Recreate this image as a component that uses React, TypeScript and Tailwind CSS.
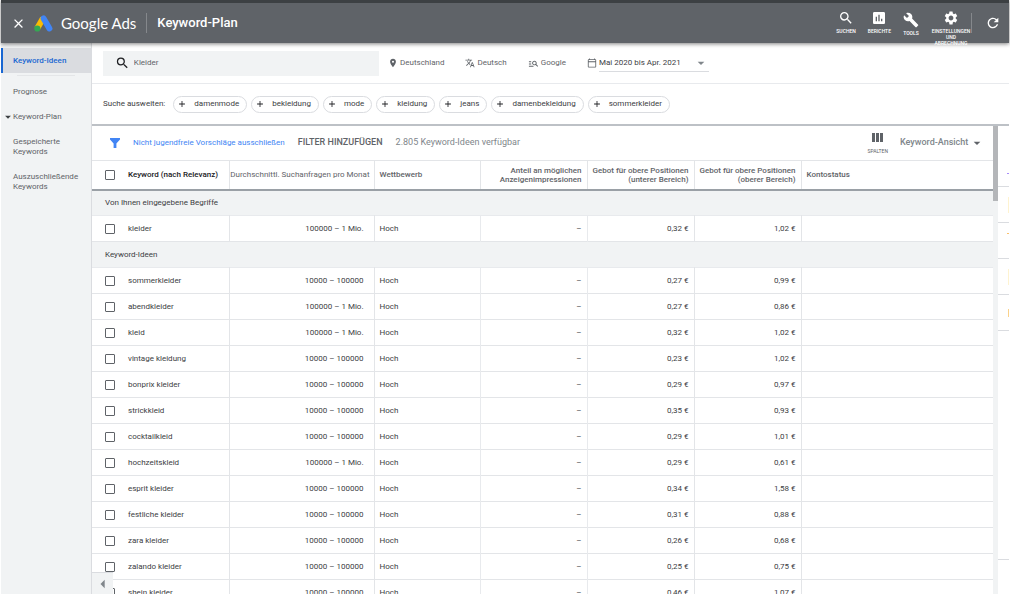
import { useState } from "react";
import {
  MdAdd,
  MdArrowDropDown,
  MdArrowLeft,
  MdAssessment,
  MdBuild,
  MdClose,
  MdManageSearch,
  MdOutlineCalendarToday,
  MdPlace,
  MdRefresh,
  MdSearch,
  MdSettings,
  MdTranslate,
} from "react-icons/md";

type Keyword = {
  name: string;
  volume: string;
  low: string;
  high: string;
};

const LOW_VOLUME = "10000 – 100000";
const HIGH_VOLUME = "100000 – 1 Mio.";

const entered: Keyword[] = [
  { name: "kleider", volume: HIGH_VOLUME, low: "0,32 €", high: "1,02 €" },
];

const ideas: Keyword[] = [
  { name: "sommerkleider", volume: LOW_VOLUME, low: "0,27 €", high: "0,99 €" },
  { name: "abendkleider", volume: HIGH_VOLUME, low: "0,27 €", high: "0,86 €" },
  { name: "kleid", volume: HIGH_VOLUME, low: "0,32 €", high: "1,02 €" },
  { name: "vintage kleidung", volume: LOW_VOLUME, low: "0,23 €", high: "1,02 €" },
  { name: "bonprix kleider", volume: LOW_VOLUME, low: "0,29 €", high: "0,97 €" },
  { name: "strickkleid", volume: LOW_VOLUME, low: "0,35 €", high: "0,93 €" },
  { name: "cocktailkleid", volume: LOW_VOLUME, low: "0,29 €", high: "1,01 €" },
  { name: "hochzeitskleid", volume: HIGH_VOLUME, low: "0,29 €", high: "0,61 €" },
  { name: "esprit kleider", volume: LOW_VOLUME, low: "0,34 €", high: "1,58 €" },
  { name: "festliche kleider", volume: LOW_VOLUME, low: "0,31 €", high: "0,88 €" },
  { name: "zara kleider", volume: LOW_VOLUME, low: "0,26 €", high: "0,68 €" },
  { name: "zalando kleider", volume: LOW_VOLUME, low: "0,25 €", high: "0,75 €" },
  { name: "shein kleider", volume: LOW_VOLUME, low: "0,46 €", high: "1,07 €" },
];

const suggestions = [
  "damenmode",
  "bekleidung",
  "mode",
  "kleidung",
  "jeans",
  "damenbekleidung",
  "sommerkleider",
];

function AdsLogo() {
  return (
    <svg viewBox="0 0 19 17" className="h-[17px] w-[19px]">
      <path d="M9 3.2 3.2 13.4" stroke="#fbbc04" strokeWidth="6" />
      <path
        d="M9.6 3.4 15.4 13.4"
        stroke="#4285f4"
        strokeWidth="6"
        strokeLinecap="round"
      />
      <circle cx="3.3" cy="13.5" r="3.1" fill="#34a853" />
    </svg>
  );
}

function Header() {
  return (
    <header className="relative z-10 flex h-[43px] shrink-0 items-center border-t-3 border-[#3c4043] bg-[#5f6368] pl-2.5 text-white shadow-[0_1px_4px_rgba(0,0,0,0.5)]">
      <button aria-label="Schließen">
        <MdClose className="size-[15px]" />
      </button>
      <div className="ml-2 flex items-center gap-2">
        <AdsLogo />
        <span className="font-['Lato',sans-serif] text-[15px] leading-5">
          Google Ads
        </span>
      </div>
      <div className="mx-[10px] h-5 w-px bg-[#85888c]" />
      <h1 className="text-[13px] font-medium">Keyword-Plan</h1>

      <nav className="ml-auto flex h-full items-start gap-3 pt-[7px] text-center text-[5px] leading-[6px] font-medium">
        <button className="flex flex-col items-center gap-0.5">
          <MdSearch className="size-4" />
          SUCHEN
        </button>
        <button className="flex flex-col items-center gap-0.5">
          <MdAssessment className="size-4" />
          BERICHTE
        </button>
        <button className="flex flex-col items-center gap-0.5 pt-0.5">
          <MdBuild className="size-4" />
          TOOLS
        </button>
        <button className="flex w-10 flex-col items-center gap-0.5">
          <MdSettings className="size-4" />
          <span>EINSTELLUNGEN UND ABRECHNUNG</span>
        </button>
      </nav>
      <div className="h-5 w-px bg-[#85888c]" />
      <button aria-label="Aktualisieren" className="mr-2 ml-[13px]">
        <MdRefresh className="size-4" />
      </button>
    </header>
  );
}

function Sidebar() {
  return (
    <nav className="w-[90px] shrink-0 bg-[#f1f3f4] pt-[5px] text-[8px] leading-[10px] text-[#5f6368]">
      <a
        href="#ideen"
        className="flex h-[25px] items-center border-l-2 border-[#1967d2] bg-[#dadce0] pl-2.5 font-medium text-[#1967d2]"
      >
        Keyword-Ideen
      </a>
      <div className="mx-4 mt-0.5 h-px bg-[#e4e6e8]" />
      <a href="#prognose" className="mt-[11px] block pl-3">
        Prognose
      </a>
      <a href="#plan" className="mt-[13px] flex items-center">
        <MdArrowDropDown className="-mr-0.5 size-3.5 text-[#3c4043]" />
        Keyword-Plan
      </a>
      <a href="#gespeichert" className="mt-[13px] block pl-3">
        Gespeicherte
        <br />
        Keywords
      </a>
      <a href="#auszuschliessen" className="mt-[15px] block pl-3">
        Auszuschließende
        <br />
        Keywords
      </a>
    </nav>
  );
}

function SearchBar() {
  return (
    <div className="flex h-[41px] items-center border-b border-[#e8eaed] pl-[11px] text-[8px] text-[#5f6368]">
      <label className="flex h-[25px] w-[276px] items-center gap-1 bg-[#f1f3f4] pl-3">
        <MdSearch aria-label="Suche" className="size-4 text-[#202124]" />
        <input
          defaultValue="Kleider"
          className="w-full bg-transparent outline-none"
        />
      </label>
      <button className="ml-[9px] flex items-center gap-0.5">
        <MdPlace className="size-[10px]" />
        Deutschland
      </button>
      <button className="ml-[21px] flex items-center gap-0.5">
        <MdTranslate className="size-[10px]" />
        Deutsch
      </button>
      <button className="ml-[21px] flex items-center gap-0.5">
        <MdManageSearch className="size-[11px]" />
        Google
      </button>
      <label className="ml-[21px] flex items-center gap-0.5">
        <MdOutlineCalendarToday
          aria-label="Zeitraum"
          className="size-[10px]"
        />
        <span className="flex h-[17px] w-[110px] items-center border-b border-[#dadce0]">
          <select className="w-full appearance-none text-[#3c4043] outline-none">
            <option>Mai 2020 bis Apr. 2021</option>
          </select>
          <MdArrowDropDown className="size-4 shrink-0 text-[#80868b]" />
        </span>
      </label>
    </div>
  );
}

function Suggestions() {
  return (
    <div className="flex h-[42px] items-center gap-1 border-b-2 border-[#bdc1c6] pl-[11px] text-[#3c4043]">
      <span className="mr-1 text-[8px]">Suche ausweiten:</span>
      {suggestions.map((s) => (
        <button
          key={s}
          className="flex h-[17px] items-center gap-[7px] rounded-full border border-[#dadce0] pr-[7px] pl-[3px] text-[8px]"
        >
          <MdAdd className="size-[10px] text-[#202124]" />
          {s}
        </button>
      ))}
    </div>
  );
}

function Toolbar() {
  return (
    <div className="flex h-[34px] shrink-0 items-center pl-[18px] text-[9px] text-[#80868b]">
      <svg viewBox="0 0 10 10" className="h-[10px] w-[10px] fill-[#4285f4]">
        <path d="M0 0h10v1.4L6.4 5.6V10H3.6V5.6L0 1.4z" />
      </svg>
      <a href="#filter" className="ml-[13px] text-[8px] text-[#4285f4]">
        Nicht jugendfreie Vorschläge ausschließen
      </a>
      <button className="ml-[13px] font-medium text-[#5f6368]">
        FILTER HINZUFÜGEN
      </button>
      <span className="ml-[13px]">2.805 Keyword-Ideen verfügbar</span>
      <button className="ml-auto flex flex-col items-center gap-1.5 text-[5px] leading-[6px] text-[#5f6368]">
        <svg viewBox="0 0 11 9" className="h-[9px] w-[11px] fill-current">
          <path d="M0 0h3v9H0zM4 0h3v9H4zM8 0h3v9H8z" />
        </svg>
        SPALTEN
      </button>
      <label className="mr-2 ml-3 flex items-center">
        <select
          aria-label="Ansicht"
          className="appearance-none font-medium outline-none"
        >
          <option>Keyword-Ansicht</option>
        </select>
        <MdArrowDropDown className="size-4 text-[#5f6368]" />
      </label>
    </div>
  );
}

function Checkbox({ label }: { label: string }) {
  return (
    <input
      type="checkbox"
      aria-label={label}
      className="ml-[13px] block size-[10px] appearance-none rounded-[1px] border border-[#5f6368] checked:bg-[#1a73e8]"
    />
  );
}

function GroupRow({ title }: { title: string }) {
  return (
    <tr className="h-[26px] border-b border-[#e8eaed] bg-[#f1f3f4]">
      <td colSpan={8} className="pl-[13px]">
        {title}
      </td>
    </tr>
  );
}

function KeywordRow({ row }: { row: Keyword }) {
  return (
    <tr className="h-[26px] border-b border-[#e3e5e8]">
      <td>
        <Checkbox label={row.name} />
      </td>
      <td className="border-r border-[#e3e5e8]">{row.name}</td>
      <td className="border-r border-[#e3e5e8] pr-2.5 text-right">
        {row.volume}
      </td>
      <td className="border-r border-[#e8eaed] pl-[5px]">Hoch</td>
      <td className="border-r border-[#e8eaed] pr-[5px] text-right">–</td>
      <td className="border-r border-[#e3e5e8] pr-[5px] text-right">
        {row.low}
      </td>
      <td className="border-r border-[#e3e5e8] pr-[5px] text-right">
        {row.high}
      </td>
      <td />
    </tr>
  );
}

function KeywordTable() {
  return (
    <table className="w-full table-fixed border-collapse text-left text-[8px] leading-[9px] text-[#3c4043]">
      <colgroup>
        <col className="w-9" />
        <col className="w-[101px]" />
        <col className="w-[145px]" />
        <col className="w-[106px]" />
        <col className="w-[107px]" />
        <col className="w-[107px]" />
        <col className="w-[107px]" />
        <col />
      </colgroup>
      <thead>
        <tr className="h-[29px] border-t border-b-2 border-t-[#e3e5e8] border-b-[#9aa0a6] text-[#5f6368] *:font-medium">
          <th>
            <Checkbox label="Alle auswählen" />
          </th>
          <th className="border-r border-[#e3e5e8] whitespace-nowrap text-[#202124]">
            Keyword (nach Relevanz)
          </th>
          <th className="border-r border-[#e3e5e8] pr-1 text-right whitespace-nowrap">
            <span className="font-normal">
              Durchschnittl. Suchanfragen pro Monat
            </span>
          </th>
          <th className="border-r border-[#e3e5e8] pl-[5px]">Wettbewerb</th>
          <th className="border-r border-[#e3e5e8] pr-[5px] text-right">
            Anteil an möglichen
            <br />
            Anzeigenimpressionen
          </th>
          <th className="border-r border-[#e3e5e8] pr-[5px] text-right whitespace-nowrap">
            Gebot für obere Positionen
            <br />
            (unterer Bereich)
          </th>
          <th className="border-r border-[#e3e5e8] pr-[5px] text-right whitespace-nowrap">
            Gebot für obere Positionen
            <br />
            (oberer Bereich)
          </th>
          <th className="pl-[5px]">Kontostatus</th>
        </tr>
      </thead>
      <tbody>
        <GroupRow title="Von Ihnen eingegebene Begriffe" />
        {entered.map((row) => (
          <KeywordRow key={row.name} row={row} />
        ))}
        <GroupRow title="Keyword-Ideen" />
        {ideas.map((row) => (
          <KeywordRow key={row.name} row={row} />
        ))}
      </tbody>
    </table>
  );
}

// edge of the panel that continues past the right side
function SidePanel() {
  return (
    <div className="flex w-[11px] shrink-0 flex-col items-end *:w-full *:border-b *:border-[#dadce0]">
      <div className="flex h-[61px] items-end justify-end pb-3">
        <span className="h-px w-0.5 bg-[#a78bfa]" />
      </div>
      <div className="flex h-9 items-center justify-end">
        <span className="h-4 w-px bg-[#fef3d0]" />
      </div>
      <div className="flex h-9 justify-end pt-2.5">
        <span className="h-px w-0.5 bg-[#fbc06a]" />
      </div>
      <div className="flex h-9 items-center justify-end">
        <span className="h-4 w-px bg-[#fef3d0]" />
      </div>
      <div className="flex h-9 items-center justify-end">
        <span className="h-2 w-px bg-[#fbd28a]" />
      </div>
      <div className="h-[229px]" />
    </div>
  );
}

export default function App() {
  const [menuOpen, setMenuOpen] = useState(true);

  return (
    <div className="flex h-screen flex-col overflow-hidden bg-white px-px font-['Roboto',sans-serif]">
      <Header />
      <div className="flex min-h-0 flex-1">
        {menuOpen && <Sidebar />}
        <main className="relative flex min-w-0 flex-1 flex-col border-l border-[#dadce0]">
          <SearchBar />
          <Suggestions />
          <div className="flex min-h-0 flex-1">
            <div className="min-w-0 flex-1 overflow-hidden">
              <Toolbar />
              <KeywordTable />
            </div>
            <div className="w-[5px] shrink-0 bg-[#f1f3f4]">
              <div className="h-[75px] bg-[#b4b6b9]" />
            </div>
            <SidePanel />
          </div>
          <button
            aria-label={menuOpen ? "Menü einklappen" : "Menü ausklappen"}
            onClick={() => setMenuOpen(!menuOpen)}
            className="absolute bottom-0 left-0 flex h-[22px] w-[21px] items-center justify-center border-t border-[#dadce0] bg-[#f1f3f4] text-[#80868b]"
          >
            <MdArrowLeft className="size-5" />
          </button>
        </main>
      </div>
    </div>
  );
}
